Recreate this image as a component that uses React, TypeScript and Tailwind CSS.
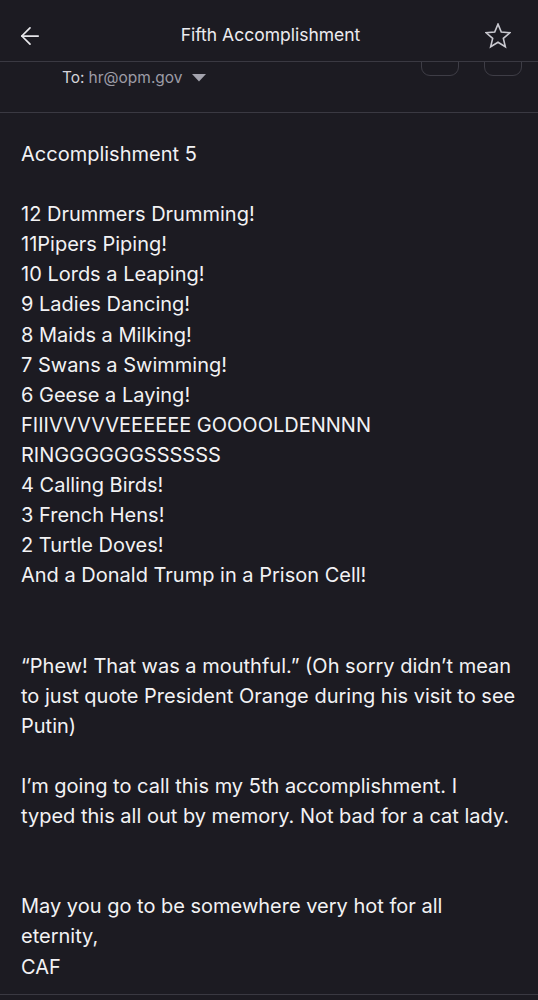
import { ArrowLeft } from "lucide-react";

const lines: string[] = [
  "Accomplishment 5",
  "",
  "12 Drummers Drumming!",
  "11Pipers Piping!",
  "10 Lords a Leaping!",
  "9 Ladies Dancing!",
  "8 Maids a Milking!",
  "7 Swans a Swimming!",
  "6 Geese a Laying!",
  "FIIIVVVVVEEEEEE GOOOOLDENNNN",
  "RINGGGGGGSSSSSS",
  "4 Calling Birds!",
  "3 French Hens!",
  "2 Turtle Doves!",
  "And a Donald Trump in a Prison Cell!",
  "",
  "",
  "“Phew! That was a mouthful.” (Oh sorry didn’t mean",
  "to just quote President Orange during his visit to see",
  "Putin)",
  "",
  "I’m going to call this my 5th accomplishment. I",
  "typed this all out by memory. Not bad for a cat lady.",
  "",
  "",
  "May you go to be somewhere very hot for all",
  "eternity,",
  "CAF",
];

function StarOutline() {
  // five-point star, sharp corners
  const pts: string[] = [];
  for (let i = 0; i < 10; i++) {
    const r = i % 2 === 0 ? 12.5 : 5.6;
    const a = (Math.PI / 5) * i - Math.PI / 2;
    pts.push(`${(13 + r * Math.cos(a)).toFixed(2)},${(13.6 + r * Math.sin(a)).toFixed(2)}`);
  }
  return (
    <svg width="26" height="26" viewBox="0 0 26 26">
      <polygon points={pts.join(" ")} fill="none" stroke="#c9c9d0" strokeWidth="1.6" strokeLinejoin="miter" />
    </svg>
  );
}

export default function App() {
  return (
    <div
      className="flex h-[1000px] w-[538px] flex-col overflow-hidden bg-[#1c1b22] text-[#f2f2f4]"
      style={{ fontFamily: "Inter, 'Liberation Sans', sans-serif" }}
    >
      {/* header */}
      <div className="relative z-10 flex h-[62px] shrink-0 items-center justify-between border-b border-[#3a3942] bg-[#1c1b22] pl-[16px] pr-[27px] pt-[10px]">
        <ArrowLeft className="h-7 w-7 text-[#e6e6ea]" strokeWidth={1.5} />
        <span className="ml-[12px] text-[17.5px] text-[#ececf0]">Fifth Accomplishment</span>
        <StarOutline />
      </div>

      {/* recipients */}
      <div className="relative flex h-[51px] shrink-0 items-start border-b border-[#3a3942] pl-[62px] pt-[4px]">
        <span className="text-[15.5px] text-[#d4d4da]">To:</span>
        <span className="ml-1 text-[15.5px] text-[#9c9ca6]">hr@opm.gov</span>
        <svg className="ml-[9px] mt-[8px]" width="14" height="8" viewBox="0 0 14 8">
          <path d="M0 0 L14 0 L7 7.5 Z" fill="#a3a3ad" />
        </svg>
        <div className="absolute right-[16px] top-[-14px] flex gap-[25px]">
          <div className="flex h-[28px] w-[38px] items-end justify-center rounded-b-[9px] border border-[#3e3d46] pb-[13px]">
            <span className="text-[8px] leading-none text-[#55545c]">··</span>
          </div>
          <div className="h-[28px] w-[38px] rounded-b-[9px] border border-[#3e3d46]" />
        </div>
      </div>

      {/* body */}
      <div className="flex-1 pl-[21px] pt-[26px] text-[20px] leading-[30.1px]">
        {lines.map((l, i) => (
          <div key={i} className="h-[30.1px] whitespace-nowrap">
            {l}
          </div>
        ))}
      </div>
      <div className="h-[6px] shrink-0 border-t border-[#3a3942]" />
    </div>
  );
}
